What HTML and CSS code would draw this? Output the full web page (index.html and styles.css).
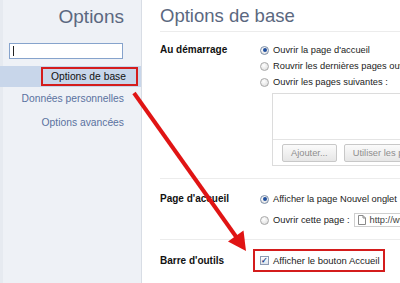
FILE: index.html
```html
<!DOCTYPE html>
<html lang="fr">
<head>
<meta charset="utf-8">
<title>Options</title>
<link rel="stylesheet" href="styles.css">
</head>
<body>
<div class="page">
  <aside class="sidebar">
    <div class="side-title">Options</div>
    <div class="search-wrap"><div class="search"><span class="caret"></span></div></div>
    <nav class="nav">
      <div class="nav-item selected"><span class="mark">Options de base</span></div>
      <div class="nav-item">Données personnelles</div>
      <div class="nav-item">Options avancées</div>
    </nav>
  </aside>
  <main class="main">
    <h1 class="main-title">Options de base</h1>
    <section class="section s1">
      <div class="label">Au démarrage</div>
      <div class="controls">
        <div class="row"><span class="radio checked"></span>Ouvrir la page d'accueil</div>
        <div class="row"><span class="radio"></span>Rouvrir les dernières pages ouvertes</div>
        <div class="row"><span class="radio"></span>Ouvrir les pages suivantes :</div>
        <div class="listbox">
          <div class="list-area"></div>
          <div class="list-buttons">
            <span class="btn">Ajouter...</span>
            <span class="btn">Utiliser les pages actuelles</span>
          </div>
        </div>
      </div>
    </section>
    <section class="section s2">
      <div class="label">Page d'accueil</div>
      <div class="controls">
        <div class="row"><span class="radio checked"></span>Afficher la page Nouvel onglet</div>
        <div class="row row2"><span class="radio"></span>Ouvrir cette page :
          <span class="url"><svg class="doc" width="8" height="10" viewBox="0 0 8 10"><path d="M0.5 0.5h4.5l2.5 2.5v6.5h-7z M5 0.5v2.5h2.5" fill="#fff" stroke="#8a8a8a" stroke-width="1"/></svg>http://www.google.fr/</span>
        </div>
      </div>
    </section>
    <section class="section s3">
      <div class="label">Barre d'outils</div>
      <div class="controls">
        <div class="mark2"><span class="check">&#10003;</span>Afficher le bouton Accueil</div>
      </div>
    </section>
  </main>
  <svg class="arrow" width="400" height="283" viewBox="0 0 400 283">
    <line x1="134" y1="93" x2="237" y2="238" stroke="#e01414" stroke-width="4"/>
    <polygon points="246,251 228,241.5 243.5,230.5" fill="#e01414"/>
  </svg>
</div>
</body>
</html>
```

FILE: styles.css
```css
* { box-sizing: border-box; }
html, body { margin: 0; padding: 0; background: #fff; }
body {
  font-family: "Liberation Sans", Arial, sans-serif;
  width: 400px;
  height: 283px;
  overflow: hidden;
}
.page {
  position: relative;
  display: flex;
  width: 400px;
  height: 283px;
  overflow: hidden;
}
.sidebar {
  width: 142px;
  flex: none;
  background: #eef1f6;
  border-left: 3px solid #e6eaf0;
  border-right: 1px solid #d8dde5;
}
.side-title {
  height: 34px;
  line-height: 34px;
  text-align: right;
  padding-right: 17px;
  font-size: 19px;
  color: #5b6880;
}
.search-wrap {
  margin-top: 9px;
  padding-left: 6px;
}
.search {
  width: 114px;
  height: 16px;
  background: #fff;
  border: 1px solid #86a3cc;
  position: relative;
}
.caret {
  position: absolute;
  left: 3px;
  top: 2px;
  width: 1px;
  height: 10px;
  background: #222;
}
.nav { margin-top: 7px; }
.nav-item {
  height: 24px;
  line-height: 24px;
  text-align: right;
  padding-right: 17px;
  font-size: 10.3px;
  color: #5a71a0;
  white-space: nowrap;
}
.nav-item.selected {
  height: 21px;
  display: flex;
  justify-content: flex-end;
  align-items: center;
  padding-right: 3px;
  margin-left: -3px;
  background: #c8d6ea;
  color: #111;
}
.mark {
  border: 2px solid #d41c1c;
  padding: 0 10px 0 8px;
  line-height: 15px;
}
.main {
  flex: 1;
  padding-left: 18px;
  min-width: 0;
  overflow: hidden;
  white-space: nowrap;
}
.main-title {
  margin: 0;
  height: 32px;
  line-height: 31px;
  font-size: 18.5px;
  font-weight: normal;
  color: #5b6880;
  border-bottom: 1px solid #ececec;
}
.section {
  display: flex;
  border-bottom: 1px solid #ececec;
}
.s1 { padding: 10px 0 12px; }
.s2 { padding: 12px 0 11px; }
.s3 { padding: 9px 0 0; border-bottom: none; align-items: center; }
.label {
  width: 100px;
  flex: none;
  font-weight: bold;
  font-size: 10px;
  line-height: 16px;
  color: #111;
}
.controls {
  flex: 1;
  min-width: 0;
  font-size: 9.3px;
  color: #222;
}
.row {
  display: flex;
  align-items: center;
  height: 16px;
}
.row2 { margin-top: 5px; }
.radio {
  width: 9px;
  height: 9px;
  border-radius: 50%;
  border: 1px solid #a9a9a9;
  background: radial-gradient(circle at 40% 35%, #fff 0%, #e4e4e4 70%, #cfcfcf 100%);
  margin-right: 4px;
  flex: none;
  position: relative;
}
.radio.checked { border-color: #7d8fa8; }
.radio.checked::after {
  content: "";
  position: absolute;
  left: 1.5px;
  top: 1.5px;
  width: 4px;
  height: 4px;
  border-radius: 50%;
  background: #1f4f9e;
}
.listbox {
  margin-top: 3px;
  margin-left: 12px;
  width: 160px;
  border: 1px solid #dcdcdc;
}
.list-area {
  height: 46px;
  border-bottom: 1px solid #e4e4e4;
}
.list-buttons {
  display: flex;
  gap: 7px;
  padding: 4px 0 3px 9px;
}
.btn {
  height: 18px;
  line-height: 16px;
  border: 1px solid #c8c8c8;
  border-radius: 2px;
  background: linear-gradient(#fbfbfb, #e6e6e6);
  color: #8e8e8e;
  font-size: 9.3px;
  padding: 0 8px;
}
.btn:first-child { width: 56px; }
.url {
  display: inline-flex;
  align-items: center;
  margin-left: 5px;
  height: 14px;
  width: 120px;
  border: 1px solid #cfcfcf;
  padding-left: 3px;
  color: #444;
}
.doc { margin-right: 3px; }
.mark2 {
  display: inline-flex;
  align-items: center;
  margin-left: -7px;
  height: 23px;
  border: 2px solid #d41c1c;
  padding: 0 3px 0 5px;
  font-size: 9.5px;
}
.check {
  width: 9px;
  height: 9px;
  border: 1px solid #8d9bb3;
  background: linear-gradient(#fff, #dde3ec);
  margin-right: 4px;
  font-size: 8px;
  line-height: 7px;
  text-align: center;
  color: #1f3f86;
  font-weight: bold;
}
.arrow {
  position: absolute;
  left: 0;
  top: 0;
  pointer-events: none;
}
```
